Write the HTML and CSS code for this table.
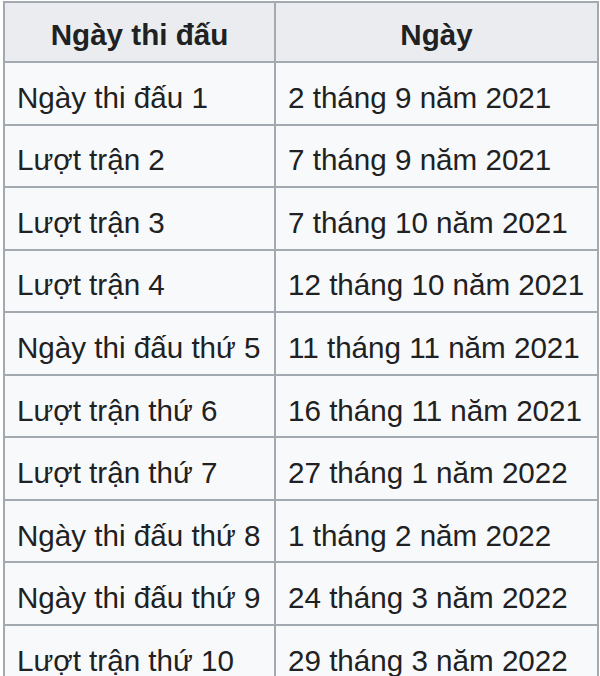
FILE: index.html
```html
<!DOCTYPE html>
<html lang="vi">
<head>
<meta charset="utf-8">
<title>Lịch thi đấu</title>
<link rel="stylesheet" href="styles.css">
</head>
<body>
<table class="wikitable">
  <colgroup>
    <col class="col-round">
    <col class="col-date">
  </colgroup>
  <thead>
    <tr><th>Ngày thi đấu</th><th>Ngày</th></tr>
  </thead>
  <tbody>
    <tr><td>Ngày thi đấu 1</td><td>2 tháng 9 năm 2021</td></tr>
    <tr><td>Lượt trận 2</td><td>7 tháng 9 năm 2021</td></tr>
    <tr><td>Lượt trận 3</td><td>7 tháng 10 năm 2021</td></tr>
    <tr><td>Lượt trận 4</td><td>12 tháng 10 năm 2021</td></tr>
    <tr><td>Ngày thi đấu thứ 5</td><td>11 tháng 11 năm 2021</td></tr>
    <tr><td>Lượt trận thứ 6</td><td>16 tháng 11 năm 2021</td></tr>
    <tr><td>Lượt trận thứ 7</td><td>27 tháng 1 năm 2022</td></tr>
    <tr><td>Ngày thi đấu thứ 8</td><td>1 tháng 2 năm 2022</td></tr>
    <tr><td>Ngày thi đấu thứ 9</td><td>24 tháng 3 năm 2022</td></tr>
    <tr><td>Lượt trận thứ 10</td><td>29 tháng 3 năm 2022</td></tr>
  </tbody>
</table>
</body>
</html>
```
FILE: styles.css
```css
html, body {
  margin: 0;
  padding: 0;
  background: #ffffff;
}

body {
  font-family: "Liberation Sans", Arial, sans-serif;
  color: #202122;
  overflow: hidden;
}

.wikitable {
  margin: 1px 0 0 3px;
  width: 596px;
  table-layout: fixed;
  border-collapse: separate;
  border-spacing: 0;
  border-top: 2px solid #a2a9b1;
  border-left: 2px solid #a2a9b1;
  font-size: 29.6px;
  line-height: normal;
}

.col-round {
  width: 271px;
}

.col-date {
  width: 323px;
}

.wikitable th,
.wikitable td {
  border-right: 2px solid #a2a9b1;
  border-bottom: 2px solid #a2a9b1;
  vertical-align: middle;
  white-space: nowrap;
}

.wikitable th {
  background: #eaecf0;
  font-weight: bold;
  text-align: center;
  padding: 5px 12px 0 12px;
  box-sizing: border-box;
  height: 60px;
}

.wikitable td {
  background: #f8f9fa;
  text-align: left;
  padding: 9px 12px 0 12px;
  box-sizing: border-box;
  height: 62.55px;
}
```
